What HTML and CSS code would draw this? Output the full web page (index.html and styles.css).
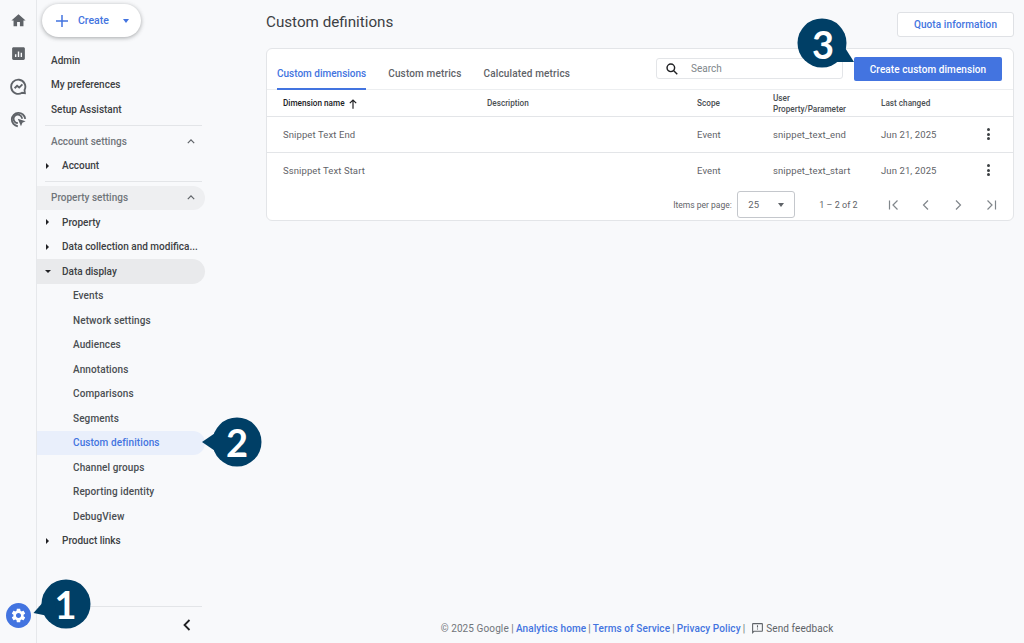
FILE: index.html
```html
<!DOCTYPE html>
<html lang="en">
<head>
<meta charset="utf-8">
<title>Custom definitions</title>
<link rel="stylesheet" href="styles.css">
</head>
<body>
<div class="app">
  <aside class="rail">
    <div class="rail-icons">
      <svg class="rail-icon" viewBox="0 0 24 24"><path d="M10 20v-6h4v6h5v-8h3L12 3 2 12h3v8z"/></svg>
      <svg class="rail-icon" viewBox="0 0 24 24"><path d="M19 3H5c-1.100 0-2 .9-2 2v14c0 1.100.9 2 2 2h14c1.100 0 2-.9 2-2V5c0-1.100-.9-2-2-2zM9 17H7v-4h2v4zm4 0h-2V9h2v8zm4 0h-2v-6h2v6z"/></svg>
      <svg class="rail-icon" viewBox="0 0 24 24" fill="none"><path class="st" d="M20.500 17A10 10 0 1 0 17 20.800l4 .7-.5-4.500z"/><path class="st" d="M6.500 14.500l3.500-3.500 3 2.500 4.500-4.500"/></svg>
      <svg class="rail-icon" viewBox="0 0 24 24" fill="none"><path class="st" d="M11 21.500A9.500 9.500 0 1 1 21.500 11"/><path class="st" d="M11 17a6 6 0 1 1 6-6"/><path d="M11 11l11 3.500-4.500 2-2 5z"/></svg>
    </div>
    <div class="gear"><svg viewBox="0 0 24 24"><path d="M19.140 12.940c.04-.3.06-.61.06-.94 0-.32-.02-.64-.07-.94l2.030-1.580c.18-.14.23-.41.12-.61l-1.920-3.320c-.12-.22-.37-.29-.59-.22l-2.390.96c-.5-.38-1.030-.7-1.620-.94l-.36-2.540c-.04-.24-.24-.41-.48-.41h-3.840c-.24 0-.43.17-.47.41l-.36 2.540c-.59.24-1.130.57-1.620.94l-2.390-.96c-.22-.08-.47 0-.59.22L2.740 8.870c-.12.21-.08.47.12.61l2.030 1.580c-.05.3-.09.63-.09.94s.02.64.07.94l-2.030 1.580c-.18.14-.23.41-.12.61l1.920 3.320c.12.22.37.29.59.22l2.390-.96c.5.38 1.030.7 1.620.94l.36 2.540c.05.24.24.41.48.41h3.840c.24 0 .44-.17.47-.41l.36-2.540c.59-.24 1.130-.56 1.620-.94l2.390.96c.22.08.47 0 .59-.22l1.920-3.320c.12-.22.07-.47-.12-.61l-2.010-1.580zM12 15.600c-1.980 0-3.600-1.620-3.600-3.600s1.620-3.600 3.600-3.600 3.600 1.620 3.600 3.600-1.620 3.600-3.600 3.600z"/></svg></div>
  </aside>

  <nav class="nav">
    <div class="create-wrap">
      <button class="create">
        <svg class="plus" viewBox="0 0 12 12"><path d="M6 0v12M0 6h12"/></svg>
        <span>Create</span>
        <i class="caret"></i>
      </button>
    </div>
    <div class="nav-list">
      <a class="row top">Admin</a>
      <a class="row top">My preferences</a>
      <a class="row top">Setup Assistant</a>
      <hr class="rule">
      <div class="row head">Account settings<svg class="chev" viewBox="0 0 10 6"><path d="M1 5l4-4 4 4"/></svg></div>
      <a class="row tree"><i class="tri"></i>Account</a>
      <hr class="rule">
      <div class="row head shaded">Property settings<svg class="chev" viewBox="0 0 10 6"><path d="M1 5l4-4 4 4"/></svg></div>
      <a class="row tree"><i class="tri"></i>Property</a>
      <a class="row tree"><i class="tri"></i><span class="clip">Data collection and modifica...</span></a>
      <a class="row tree shaded strong"><i class="tri open"></i>Data display</a>
      <a class="row sub">Events</a>
      <a class="row sub">Network settings</a>
      <a class="row sub">Audiences</a>
      <a class="row sub">Annotations</a>
      <a class="row sub">Comparisons</a>
      <a class="row sub">Segments</a>
      <a class="row sub active">Custom definitions</a>
      <a class="row sub">Channel groups</a>
      <a class="row sub">Reporting identity</a>
      <a class="row sub">DebugView</a>
      <a class="row tree"><i class="tri"></i>Product links</a>
    </div>
    <div class="nav-foot">
      <svg class="collapse" viewBox="0 0 8 12"><path d="M6.500 1L1.500 6l5 5"/></svg>
    </div>
  </nav>

  <main class="main">
    <div class="page">
      <header class="page-head">
        <h1>Custom definitions</h1>
        <button class="quota">Quota information</button>
      </header>
      <section class="card">
        <div class="toolbar">
          <div class="tabs">
            <a class="tab current">Custom dimensions</a>
            <a class="tab">Custom metrics</a>
            <a class="tab">Calculated metrics</a>
          </div>
          <label class="search">
            <svg viewBox="0 0 24 24"><circle cx="10" cy="10" r="6.500"/><path d="M15 15l6 6"/></svg>
            <span>Search</span>
          </label>
          <button class="primary">Create custom dimension</button>
        </div>
        <div class="grid grid-head">
          <div class="name-head">Dimension name <svg viewBox="0 0 10 12"><path d="M5 12V1.500M1 5l4-4 4 4"/></svg></div>
          <div>Description</div>
          <div>Scope</div>
          <div>User<br>Property/Parameter</div>
          <div>Last changed</div>
          <div></div>
        </div>
        <div class="grid grid-row first">
          <div>Snippet Text End</div><div></div><div>Event</div><div>snippet_text_end</div><div>Jun 21, 2025</div>
          <div class="dots"><i></i><i></i><i></i></div>
        </div>
        <div class="grid grid-row last">
          <div>Ssnippet Text Start</div><div></div><div>Event</div><div>snippet_text_start</div><div>Jun 21, 2025</div>
          <div class="dots"><i></i><i></i><i></i></div>
        </div>
        <div class="pager">
          <span class="ipp">Items per page:</span>
          <div class="select"><span>25</span><i class="caret grey"></i></div>
          <span class="range">1 – 2 of 2</span>
          <div class="pager-icons">
            <svg viewBox="0 0 12 12"><path d="M1.500 1.500v9M9.500 1.500L5 6l4.500 4.500"/></svg>
            <svg viewBox="0 0 12 12"><path d="M8 1.500L3.500 6 8 10.500"/></svg>
            <svg viewBox="0 0 12 12"><path d="M4 1.500L8.500 6 4 10.500"/></svg>
            <svg viewBox="0 0 12 12"><path d="M10.500 1.500v9M2.500 1.500L7 6l-4.500 4.500"/></svg>
          </div>
        </div>
      </section>
    </div>
    <footer class="foot">
      <span>© 2025 Google |</span> <a>Analytics home</a> <span>|</span> <a>Terms of Service</a> <span>|</span> <a>Privacy Policy</a> <span>|</span>
      <svg class="fb" viewBox="0 0 24 24"><path d="M20 2H4c-1.100 0-2 .9-2 2v18l4-4h14c1.100 0 2-.9 2-2V4c0-1.100-.9-2-2-2zm0 14H5.200L4 17.200V4h16v12zM11 12h2v2h-2zm0-6h2v4h-2z"/></svg>
      <span class="fb-text">Send feedback</span>
    </footer>
  </main>
</div>

<div class="callout c1"><svg viewBox="0 0 70 60"><circle cx="42" cy="28" r="24.500"/><path d="M9.500 37L28 16l6 26z"/></svg><span>1</span></div>
<div class="callout c2"><svg viewBox="0 0 70 60"><circle cx="42" cy="30" r="24.500"/><path d="M7 30l22-15v30z"/></svg><span>2</span></div>
<div class="callout c3"><svg viewBox="0 0 70 60"><circle cx="28" cy="28" r="24.500"/><path d="M60 47L43 20l-8 27z"/></svg><span>3</span></div>
</body>
</html>
```

FILE: styles.css
```css
* { box-sizing: border-box; }
html, body { margin: 0; height: 100%; }
body {
  background: #f8f9fb;
  color: #3c4043;
  font-family: Roboto, "Liberation Sans", sans-serif;
  font-size: 10px;
  overflow: hidden;
  position: relative;
}
button { font-family: inherit; cursor: pointer; }
.app { display: flex; height: 643px; }

/* rail */
.rail {
  width: 37px;
  flex: none;
  border-right: 1.500px solid #e6e8eb;
  display: flex;
  flex-direction: column;
  justify-content: space-between;
  align-items: center;
  padding: 12px 0 15px;
}
.rail-icons { display: flex; flex-direction: column; gap: 16px; }
.rail-icon { width: 17px; height: 17px; fill: #5f6368; display: block; }
.rail-icon .st { stroke: #5f6368; stroke-width: 2.600; fill: none; }
.gear {
  width: 25px; height: 25px;
  border-radius: 50%;
  background: #4374e0;
  display: flex; align-items: center; justify-content: center;
}
.gear svg { width: 17px; height: 17px; fill: #fff; }

/* nav */
.nav {
  width: 167.500px;
  flex: none;
  display: flex;
  flex-direction: column;
}
.create-wrap { padding: 4px 0 11px 5px; }
.create {
  width: 99px; height: 33px;
  border: 0;
  border-radius: 17px;
  background: #fff;
  box-shadow: 0 1px 4px rgba(60,64,67,.45);
  display: flex; align-items: center;
  padding: 0 0 0 14px;
  color: #4374e0;
  font-size: 10.500px;
  font-weight: 500;
}
.plus { width: 12px; height: 12px; fill: none; stroke: #4374e0; stroke-width: 1.500; margin-right: 10px; }
.caret {
  width: 0; height: 0;
  border-left: 3.500px solid transparent;
  border-right: 3.500px solid transparent;
  border-top: 4px solid #4374e0;
  margin-left: 14px;
}
.caret.grey { border-top-color: #5f6368; }
.nav-list { display: flex; flex-direction: column; flex: 1; }
.row {
  height: 24.500px;
  flex: none;
  display: flex;
  align-items: center;
  position: relative;
  white-space: nowrap;
  font-weight: 500;
  color: #3c4043;
}
.top { padding-left: 14px; }
.head {
  padding: 0 10px 0 14px;
  justify-content: space-between;
  color: #70757a;
}
.tree { padding-left: 25px; color: #3c4043; }
.sub { padding-left: 36px; color: #4a4e52; letter-spacing: .1px; }
.shaded { background: #eeeff1; border-radius: 0 12.500px 12.500px 0; }
.strong { background: #e9eaec; }
.active { background: #e9effb; color: #4374e0; border-radius: 0 12.500px 12.500px 0; }
.tri {
  position: absolute;
  left: 9px; top: 9px;
  width: 0; height: 0;
  border-top: 3px solid transparent;
  border-bottom: 3px solid transparent;
  border-left: 3px solid #202124;
}
.tri.open {
  left: 8px; top: 11px;
  border-left: 3px solid transparent;
  border-right: 3px solid transparent;
  border-top: 3px solid #202124;
  border-bottom: 0;
}
.chev { width: 8px; height: 5px; fill: none; stroke: #5f6368; stroke-width: 1.500; }
.rule { border: 0; height: 1px; background: #e3e5e8; margin: 3px 3px 3.500px 8px; flex: none; }
.nav-foot {
  height: 37px;
  margin: 0 3px 0 1px;
  border-top: 1px solid #e3e5e8;
  display: flex;
  justify-content: flex-end;
  align-items: center;
  padding-right: 10.500px;
}
.collapse { width: 8px; height: 12px; fill: none; stroke: #202124; stroke-width: 1.800; }

/* main */
.main {
  flex: 1;
  display: flex;
  flex-direction: column;
  justify-content: space-between;
  padding: 12px 10px 8.500px 61.500px;
}
.page-head {
  display: flex;
  justify-content: space-between;
  align-items: flex-start;
  height: 36px;
}
h1 { margin: 0; font-size: 15.200px; font-weight: 400; color: #3c4043; line-height: 20px; }
.quota {
  width: 117px; height: 24.500px;
  background: #fff;
  border: 1px solid #dfe1e5;
  border-radius: 3px;
  color: #4374e0;
  font-size: 10px;
  font-weight: 500;
  letter-spacing: .1px;
  padding: 0;
}
.card {
  background: #fff;
  border: 1px solid #e3e5e8;
  border-radius: 6px;
  height: 173px;
}
.toolbar {
  display: flex;
  align-items: center;
  height: 41px;
  border-bottom: 1px solid #eceef0;
  padding-right: 11px;
}
.tabs { display: flex; flex: 1; height: 100%; padding-left: 10px; gap: 22px; align-items: stretch; }
.tab {
  display: flex; align-items: center;
  font-weight: 500;
  letter-spacing: .15px;
  color: #5f6368;
  padding-top: 9px;
  border-bottom: 2px solid transparent;
  margin-bottom: -1px;
}
.tab.current { color: #4374e0; border-bottom-color: #4374e0; letter-spacing: 0; }
.search {
  width: 187px; height: 21.500px;
  border: 1px solid #e3e5e8;
  border-radius: 3px;
  display: flex; align-items: center;
  padding-left: 8px;
  margin: -1px 11px 0 0;
  color: #80868b;
}
.search svg { width: 14px; height: 14px; fill: none; stroke: #202124; stroke-width: 2.500; margin-right: 12px; }
.primary {
  width: 148px; height: 24.500px;
  background: #4374e0;
  color: #fff;
  border: 0;
  border-radius: 2px;
  font-size: 10px;
  font-weight: 500;
  letter-spacing: .08px;
  padding: 0;
}
.grid {
  display: grid;
  grid-template-columns: 204px 210px 76px 108px 104px 1fr;
  padding-left: 16px;
  align-items: center;
  border-bottom: 1px solid #e3e5e8;
}
.grid-head { height: 27px; padding-top: 1px; font-size: 8.200px; font-weight: 500; color: #4a4e52; line-height: 11px; }
.name-head { display: flex; align-items: center; gap: 4px; color: #202124; }
.name-head svg { width: 8px; height: 10px; fill: none; stroke: #202124; stroke-width: 1.500; }
.grid-row { height: 35.500px; font-size: 9.500px; letter-spacing: .1px; color: #5f6368; }
.grid-row.last { border-bottom: 0; }
.dots { display: flex; flex-direction: column; align-items: center; gap: 1.500px; width: 6px; }
.dots i { width: 3px; height: 3px; border-radius: 50%; background: #3c4043; display: block; }
.pager {
  display: flex;
  align-items: center;
  justify-content: flex-end;
  height: 33px;
  font-size: 8.500px;
  color: #5f6368;
  padding-right: 16.500px;
}
.select {
  width: 57.500px; height: 27px;
  border: 1px solid #c4c7cc;
  border-radius: 3px;
  display: flex; align-items: center; justify-content: space-between;
  padding: 0 10px;
  margin: 0 24.500px 0 5.500px;
}
.select .caret { margin: 0; }
.select span { font-size: 9.500px; }
.range { font-size: 9px; margin-right: 30px; }
.pager-icons { display: flex; gap: 20.300px; }
.pager-icons svg { width: 12px; height: 12px; fill: none; stroke: #80868b; stroke-width: 1.200; }

/* footer */
.foot {
  display: flex;
  align-items: center;
  justify-content: center;
  gap: 2px;
  font-size: 10px;
  color: #70757a;
  letter-spacing: .1px;
  padding-right: 6px;
}
.foot a { color: #4374e0; font-weight: 500; }
.fb { width: 13px; height: 13px; fill: #5f6368; margin-left: 4px; }
.fb-text { color: #5f6368; }

/* callouts */
.callout { position: absolute; width: 70px; height: 60px; }
.callout svg { position: absolute; inset: 0; width: 70px; height: 60px; fill: #003f66; }
.callout span {
  position: absolute;
  top: 0;
  width: 50px;
  height: 56px;
  line-height: 56px;
  text-align: center;
  color: #fff;
  font-family: Lato, "DejaVu Sans", sans-serif;
  font-weight: 700;
  font-size: 38px;
}
.c1 { left: 23.500px; top: 575.500px; }
.c1 span { left: 17px; }
.c2 { left: 195px; top: 412px; }
.c2 span { left: 17px; top: 2px; }
.c3 { left: 794px; top: 15px; }
.c3 span { left: 4px; top: 1px; }
```
